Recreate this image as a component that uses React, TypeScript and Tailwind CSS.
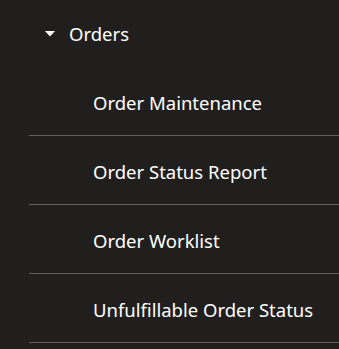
import React from "react";

const items = [
  "Order Maintenance",
  "Order Status Report",
  "Order Worklist",
  "Unfulfillable Order Status",
];

export default function App() {
  return (
    <div
      className="w-[339px] h-[349px] overflow-hidden bg-[#201f1e] text-white"
      style={{ fontFamily: '"Noto Sans", "Open Sans", sans-serif' }}
    >
      <div className="h-[67px] flex items-center pl-[45px] pt-[1px]">
        <svg width="10" height="6" viewBox="0 0 10 6" className="mr-[14px]">
          <path d="M0 0h10L5 5.5z" fill="#ffffff" />
        </svg>
        <span className="text-[18.5px]">Orders</span>
      </div>
      <ul className="ml-[29px]">
        {items.map((label) => (
          <li
            key={label}
            className="h-[69px] flex items-center pl-[64px] pt-[3px] border-b border-[#5f5f5f] text-[18.5px]"
          >
            {label}
          </li>
        ))}
      </ul>
    </div>
  );
}
